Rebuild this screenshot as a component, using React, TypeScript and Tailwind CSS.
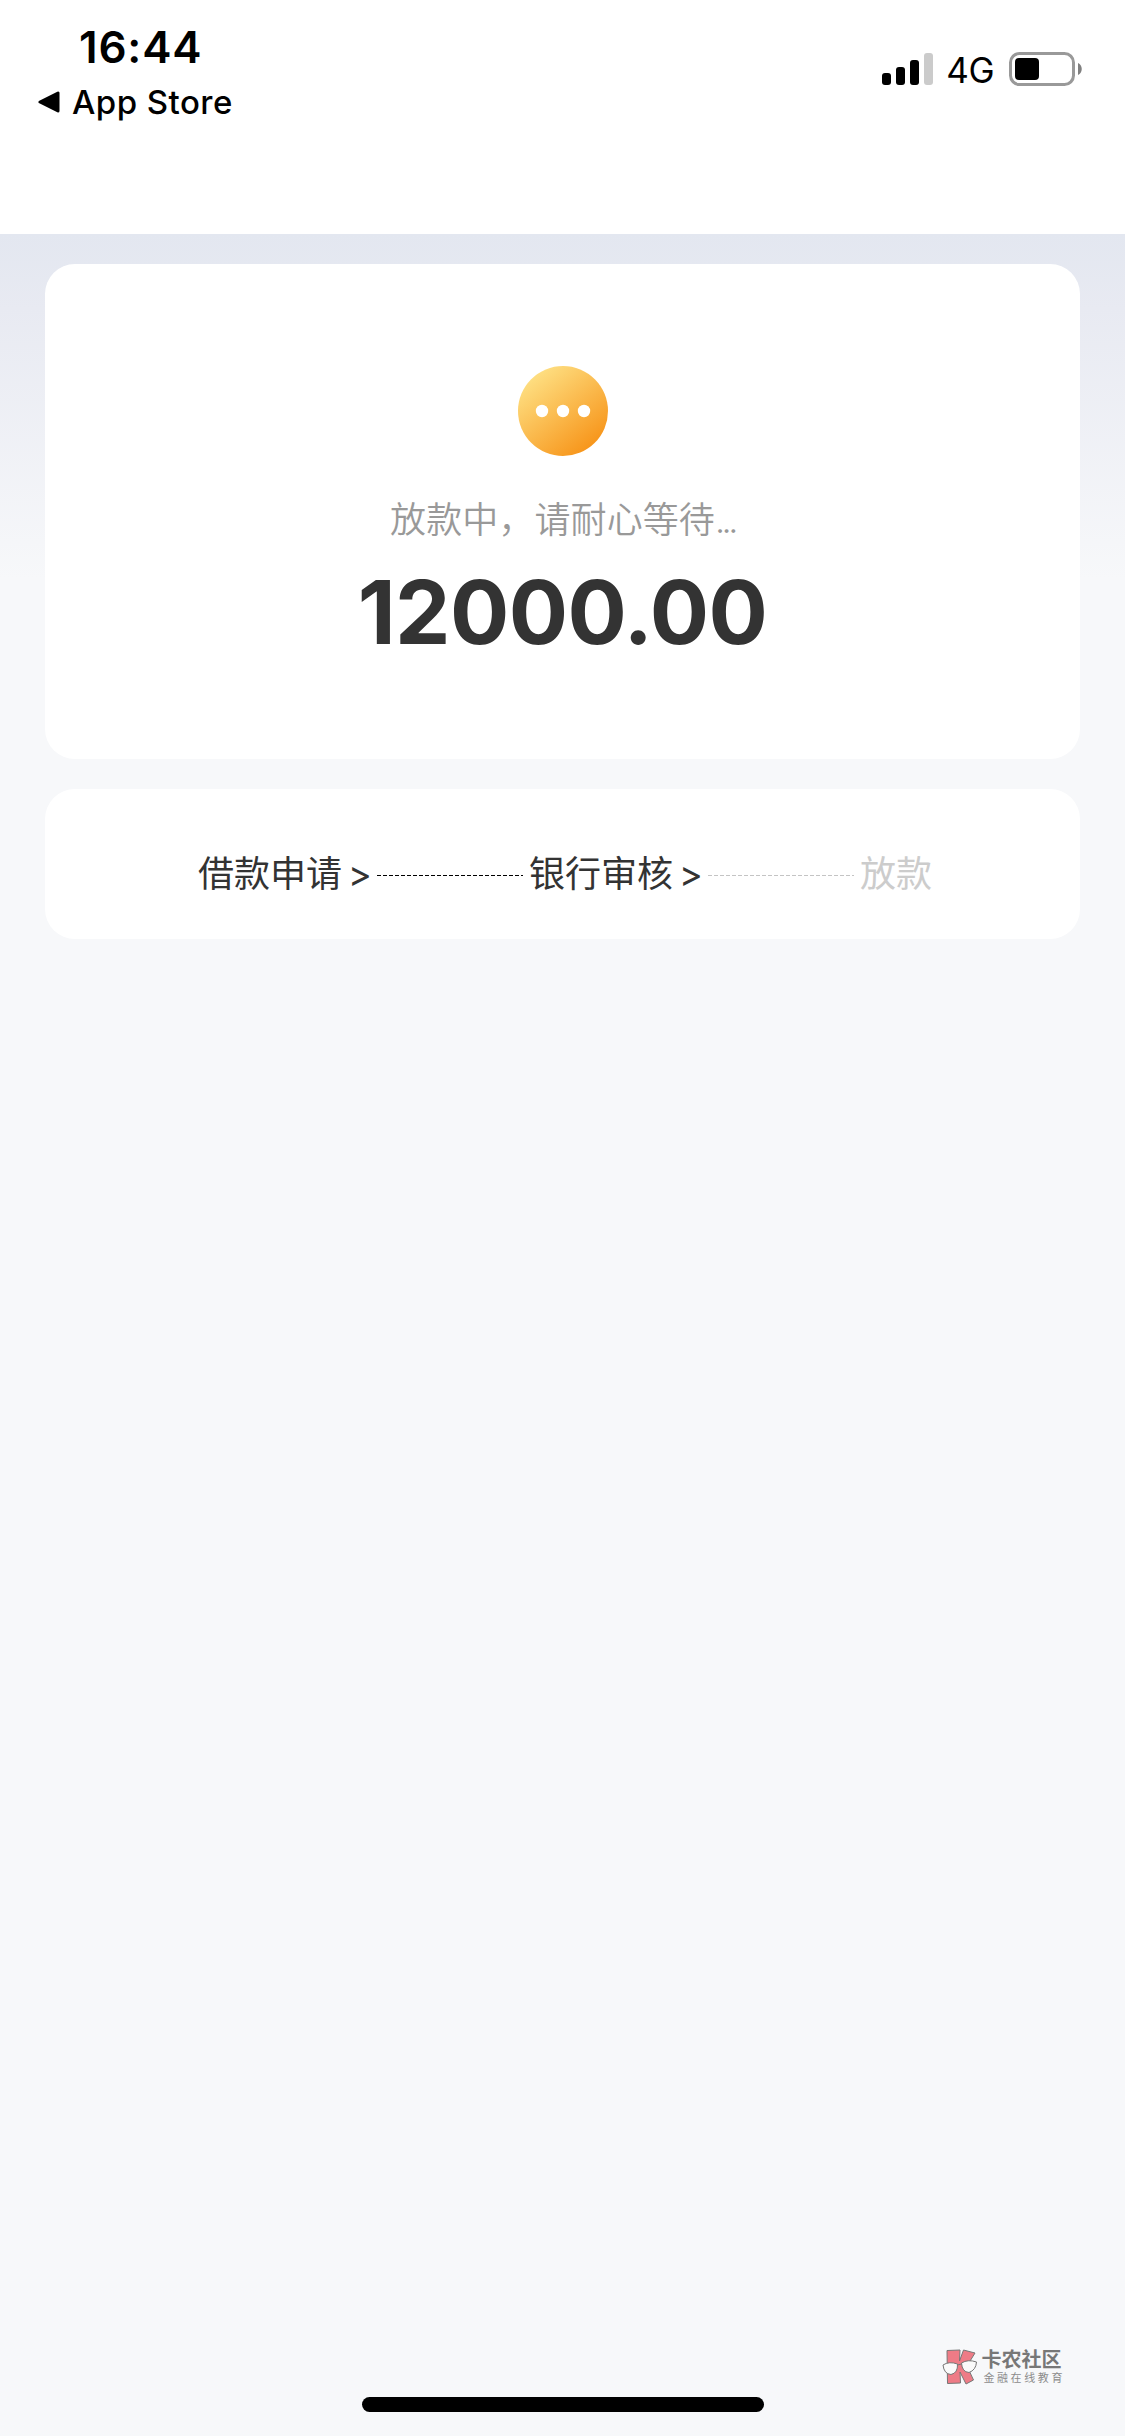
import React from 'react';

interface StepProps {
  label: string;
  done?: boolean;
}

const cjk = "font-['Inter','Noto_Sans_CJK_SC',sans-serif]";

const StatusBar = () => (
  <header className="flex h-[234px] items-start justify-between bg-white font-['Inter',sans-serif] text-black">
    <div className="pt-[20px] pl-[38px]">
      <div className="pl-[41px] text-[44px] leading-[54px] font-semibold tracking-[0.8px]">16:44</div>
      <div className="flex items-center pt-[8px]">
        <svg className="h-[22px] w-[22px]" viewBox="0 0 22 22">
          <path d="M2 11 L20 2 V20 Z" fill="#000" stroke="#000" strokeWidth="3" strokeLinejoin="round" />
        </svg>
        <span className="pl-[12px] text-[33px] leading-[40px] font-[450] tracking-[0.45px]">App Store</span>
      </div>
    </div>
    <div className="flex items-center pt-[49px] pr-[42px]">
      <svg className="h-[32px] w-[52px]" viewBox="0 0 52 32">
        <rect x="1" y="20" width="9" height="12" rx="3" />
        <rect x="15" y="14" width="9" height="18" rx="3" />
        <rect x="29" y="7" width="9" height="25" rx="3" />
        <rect x="43" y="0" width="9" height="32" rx="3" fill="#cbcbcb" />
      </svg>
      <span className="pt-[2px] pl-[13px] text-[35px] leading-[38px] tracking-[-0.5px]">4G</span>
      <svg className="ml-[15px] h-[34px] w-[74px]" viewBox="0 0 74 34">
        <rect x="1.5" y="1.5" width="63" height="31" rx="9" fill="none" stroke="#999" strokeWidth="3" />
        <rect x="6" y="6" width="24" height="22" rx="4" />
        <path d="M69 11 C74 13 74 21 69 23 Z" fill="#808080" />
      </svg>
    </div>
  </header>
);

const PendingIcon = () => (
  <svg className="h-[90px] w-[90px]" viewBox="0 0 90 90">
    <defs>
      <linearGradient id="pending" x1="0.15" y1="0.1" x2="0.8" y2="0.92">
        <stop offset="0" stopColor="#fee083" />
        <stop offset="1" stopColor="#f7951a" />
      </linearGradient>
    </defs>
    <circle cx="45" cy="45" r="45" fill="url(#pending)" />
    <circle cx="24" cy="45" r="6.2" fill="#fff" />
    <circle cx="45" cy="45" r="6.2" fill="#fff" />
    <circle cx="66" cy="45" r="6.2" fill="#fff" />
  </svg>
);

const Step = ({ label, done }: StepProps) => (
  <span className={done ? 'text-[#333]' : 'text-[#ccc]'}>{label}</span>
);

const StepLine = ({ active }: { active?: boolean }) => (
  <svg className="mx-[6px] mt-[3px] h-[1px] w-[146px]" viewBox="0 0 146 1" shapeRendering="crispEdges">
    <path d="M0 .5H146" stroke={active ? '#000' : '#c4c4c4'} strokeWidth="1" strokeDasharray="3.5 2.5" />
  </svg>
);

const Watermark = () => (
  <div className="absolute right-[60px] bottom-[51px] flex items-center">
    <svg className="h-[36px] w-[36px]" viewBox="0 0 36 36">
      <g stroke="#777" strokeWidth="1" strokeLinejoin="round">
        <path d="M5 1.5 L18 1 L17.5 12 L21.5 1 L33 4 L25 17 L31.5 31 L24 35 L18 23 L18.5 34 L5.5 34.5 Z" fill="#ee7b86" />
        <path d="M1 16 Q7 12 15.5 15 Q16 24 9 25.5 Q2 25 1 16 Z" fill="#fafafa" />
        <path d="M19.5 14 Q26 10 34.5 13 Q34 21 27 23.5 Q20 23 19.5 14 Z" fill="#fafafa" />
        <path d="M15.5 16 L19.5 15" fill="none" />
      </g>
    </svg>
    <div className="pl-[3px] text-[#777]">
      <div className="text-[20px] leading-[20px] font-bold">卡农社区</div>
      <div className="pt-[1px] pl-[2px] text-[11px] leading-[14px] tracking-[2.6px] text-[#8c8c8c]">金融在线教育</div>
    </div>
  </div>
);

const App = () => {
  return (
    <div className={`relative flex h-[2436px] w-[1125px] flex-col bg-[#f7f8fa] ${cjk}`}>
      <StatusBar />
      <main className="flex-1 bg-[linear-gradient(180deg,#e3e7f0_0px,#e8eaf2_75px,#f7f8fa_345px)] px-[45px] pt-[30px]">
        <section className="flex h-[495px] flex-col items-center rounded-[30px] bg-white pt-[102px]">
          <PendingIcon />
          <p className="mt-[37px] text-[36px] leading-[54px] font-[350] tracking-[0.1px] text-[#999]">
            放款中，请耐心等待<span className="tracking-[-3.5px]">...</span>
          </p>
          <p className="mt-[11px] text-[88px] leading-[108px] font-bold tracking-[-0.6px] text-[#333]">12000.00</p>
        </section>
        <section className="mt-[30px] flex h-[150px] items-center rounded-[30px] bg-white pt-[20px] pl-[153px] text-[36px] leading-[54px]">
          <Step label="借款申请" done />
          <span className="w-[29px] pl-[6px] text-[#333]">&gt;</span>
          <StepLine active />
          <Step label="银行审核" done />
          <span className="w-[29px] pl-[6px] text-[#333]">&gt;</span>
          <StepLine />
          <Step label="放款" />
        </section>
      </main>
      <Watermark />
      {/* Home indicator */}
      <div className="absolute bottom-[24px] left-[362px] h-[15px] w-[402px] rounded-full bg-black"></div>
    </div>
  );
};

export default App;
